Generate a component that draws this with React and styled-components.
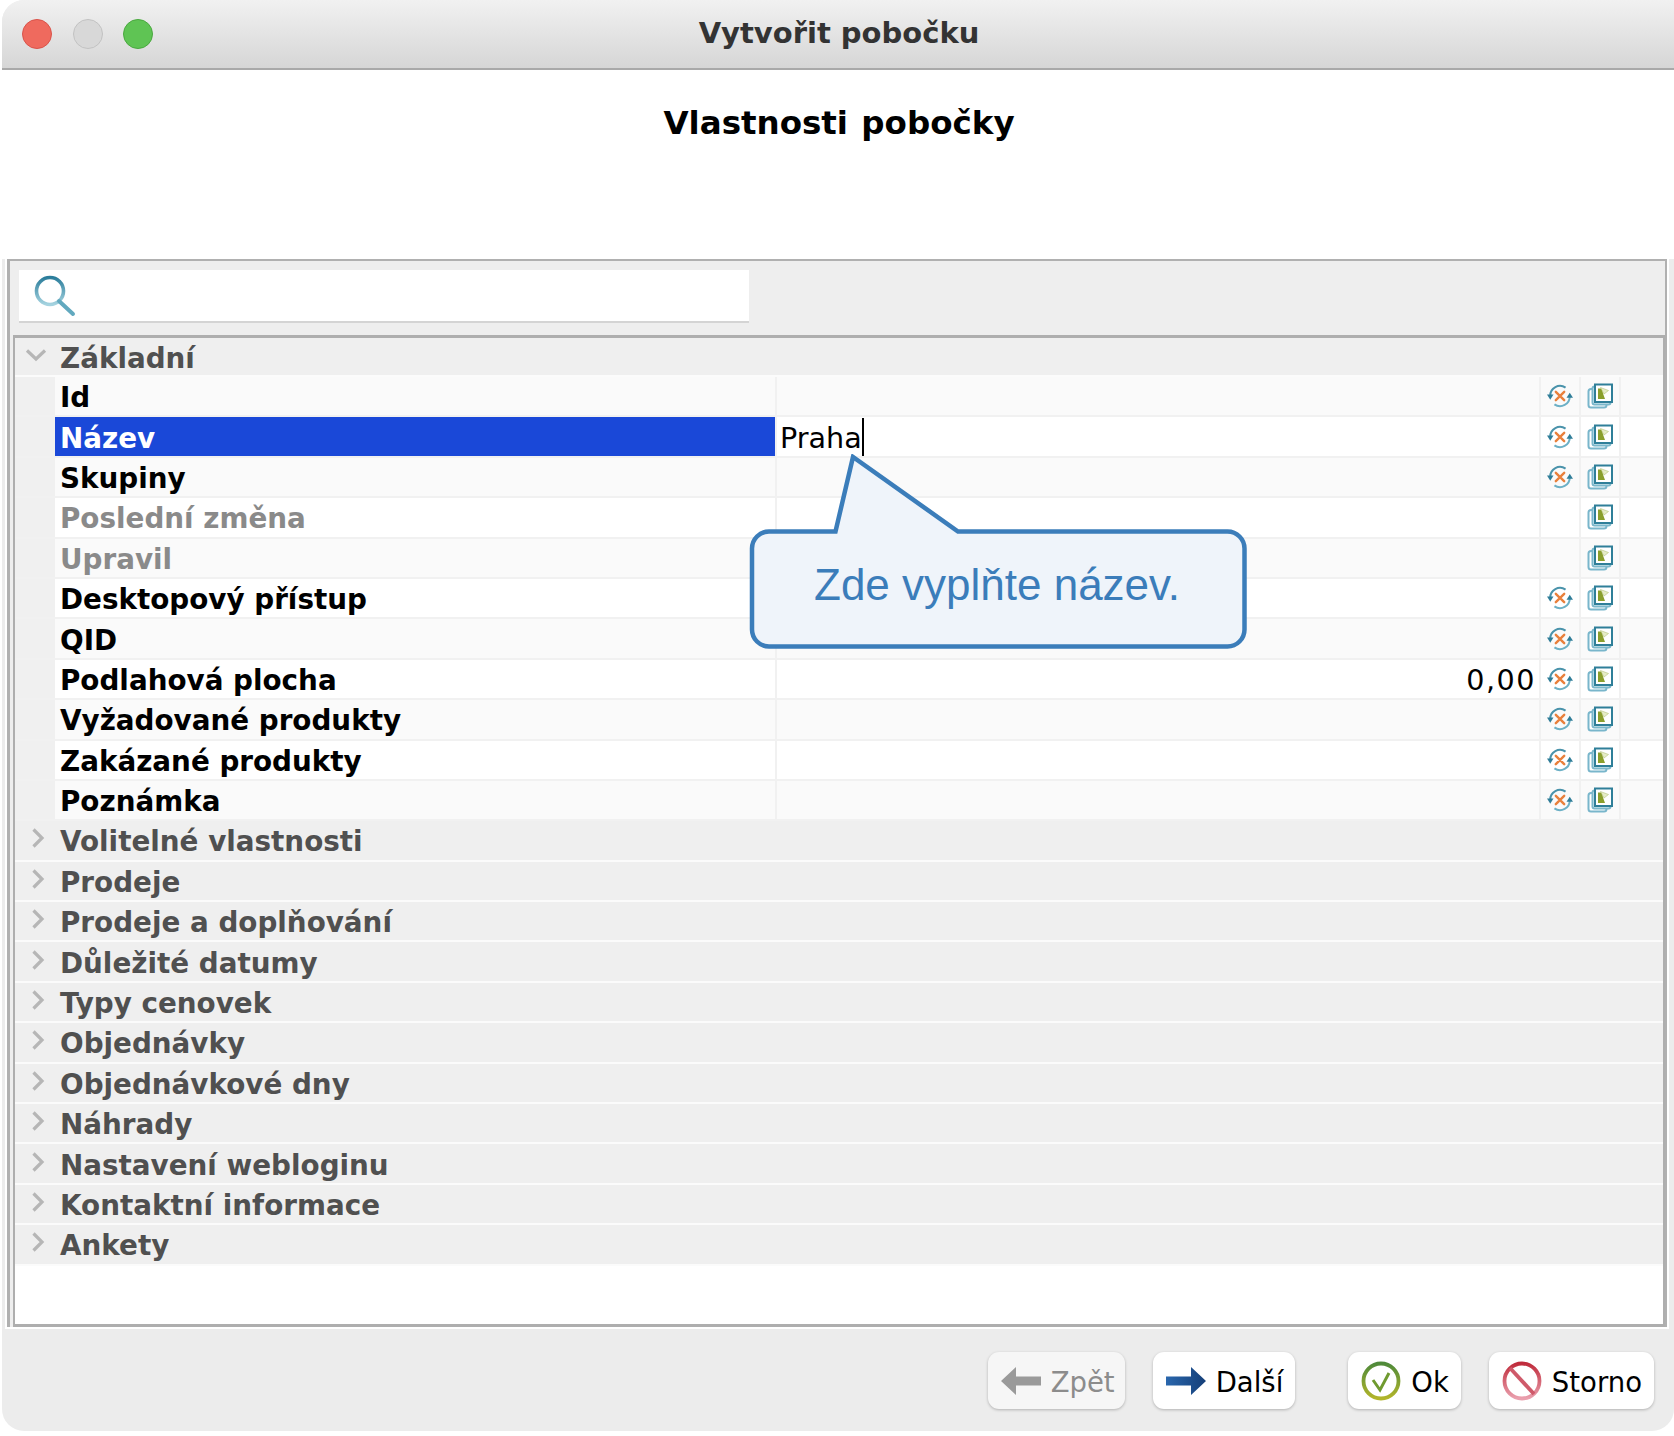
import React from 'react';
import styled, { createGlobalStyle } from 'styled-components';

const Global = createGlobalStyle`
  html, body { margin: 0; padding: 0; background: #fff; }
  body { font-family: "DejaVu Sans", "Noto Sans", sans-serif; }
`;

const ROWS = [
  { label: 'Id' },
  { label: 'Název', selected: true, value: 'Praha' },
  { label: 'Skupiny' },
  { label: 'Poslední změna', disabled: true },
  { label: 'Upravil', disabled: true },
  { label: 'Desktopový přístup' },
  { label: 'QID' },
  { label: 'Podlahová plocha', number: '0,00' },
  { label: 'Vyžadované produkty' },
  { label: 'Zakázané produkty' },
  { label: 'Poznámka' },
];

const GROUPS = [
  'Volitelné vlastnosti',
  'Prodeje',
  'Prodeje a doplňování',
  'Důležité datumy',
  'Typy cenovek',
  'Objednávky',
  'Objednávkové dny',
  'Náhrady',
  'Nastavení webloginu',
  'Kontaktní informace',
  'Ankety',
];

const ChevronDown = () => (
  <svg width="22" height="14" viewBox="0 0 22 14">
    <path d="M2 2.500l9 8.500 9-8.500" fill="none" stroke="#b6b6b6" strokeWidth="3.200" />
  </svg>
);

const ChevronRight = () => (
  <svg width="14" height="20" viewBox="0 0 14 20">
    <path d="M2.500 1.500l8.500 8.500-8.500 8.500" fill="none" stroke="#b6b6b6" strokeWidth="3.200" />
  </svg>
);

const ResetIcon = () => (
  <svg width="26" height="26" viewBox="0 0 28 28">
    <path d="M3.500 14A10.500 10.500 0 0 1 20 5" fill="none" stroke="#4a93ab" strokeWidth="2.200" />
    <path d="M24.500 14A10.500 10.500 0 0 1 8 23" fill="none" stroke="#6cb0c6" strokeWidth="2.200" />
    <path d="M0 12.500h7l-3.500 5.500z" fill="#2f7d98" />
    <path d="M21 16h7l-3.500-5.500z" fill="#2f7d98" />
    <path d="M9.500 9.500l9 9M18.500 9.500l-9 9" stroke="#e9803c" strokeWidth="2.600" strokeLinecap="round" />
  </svg>
);

const CopyIcon = () => (
  <svg width="26" height="26" viewBox="0 0 26 26">
    <rect x="1.500" y="6" width="18" height="18.500" rx="2.500" fill="#fff" stroke="#79b6cb" strokeWidth="2" />
    <rect x="5.500" y="3.500" width="18" height="18" rx="2" fill="#e8f3f6" stroke="#7ab7cb" strokeWidth="2" />
    <rect x="8" y="1.500" width="17" height="17.500" fill="#fff" stroke="#2f7f99" strokeWidth="2" />
    <path d="M11 5.500h4l1 5 2 5.500h-7z" fill="#8a9f2c" />
    <path d="M13.500 4.500l8 3-4.500 3.500z" fill="#e6ecc8" stroke="#b5c27a" strokeWidth="0.600" />
  </svg>
);

const SearchIcon = () => (
  <svg width="42" height="42" viewBox="0 0 42 42">
    <defs>
      <linearGradient id="lens" x1="0" y1="0" x2="0" y2="1">
        <stop offset="0" stopColor="#2b7d9b" />
        <stop offset="1" stopColor="#a5d3e0" />
      </linearGradient>
    </defs>
    <circle cx="16" cy="16" r="13.500" fill="none" stroke="url(#lens)" strokeWidth="3.600" />
    <path d="M25 26l14 13" stroke="#62a9bf" strokeWidth="4" strokeLinecap="round" />
  </svg>
);

const BackArrow = () => (
  <svg width="40" height="28" viewBox="0 0 40 28">
    <path d="M0 14L15 0v9.500h25v9H15V28z" fill="#9a9a9a" />
  </svg>
);

const NextArrow = () => (
  <svg width="40" height="28" viewBox="0 0 40 28">
    <defs>
      <linearGradient id="next" x1="0" y1="0" x2="1" y2="0">
        <stop offset="0" stopColor="#2a67ad" />
        <stop offset="1" stopColor="#153f78" />
      </linearGradient>
    </defs>
    <path d="M40 14L25 0v9.500H0v9h25V28z" fill="url(#next)" />
  </svg>
);

const OkIcon = () => (
  <svg width="40" height="42" viewBox="0 0 40 42">
    <defs>
      <linearGradient id="okRing" x1="0" y1="0" x2="0" y2="1">
        <stop offset="0" stopColor="#4f8a3a" />
        <stop offset="1" stopColor="#b2b52a" />
      </linearGradient>
    </defs>
    <circle cx="20" cy="21" r="17.500" fill="#fff" stroke="url(#okRing)" strokeWidth="3.800" />
    <path d="M12 20l7 10 9-17" fill="none" stroke="#6f9a2f" strokeWidth="3" />
  </svg>
);

const CancelIcon = () => (
  <svg width="40" height="42" viewBox="0 0 40 42">
    <defs>
      <linearGradient id="noRing" x1="0" y1="0" x2="0" y2="1">
        <stop offset="0" stopColor="#c02c3c" />
        <stop offset="1" stopColor="#eaa0ae" />
      </linearGradient>
    </defs>
    <circle cx="20" cy="21" r="17.500" fill="#fff" stroke="url(#noRing)" strokeWidth="3.800" />
    <path d="M8 8l24 26" stroke="#cf5a6a" strokeWidth="3.800" />
  </svg>
);

export default function App() {
  return (
    <>
      <Global />
      <Window>
        <TitleBar>
          <Lights>
            <Light color="#ef6a5e" edge="#d9534a" />
            <Light color="#d8d8d8" edge="#c2c2c2" />
            <Light color="#5fc454" edge="#4aa83f" />
          </Lights>
          <Title>Vytvořit pobočku</Title>
        </TitleBar>
        <Header>
          <Heading>Vlastnosti pobočky</Heading>
        </Header>
        <Panel>
          <SearchRow>
            <SearchBox>
              <SearchIcon />
            </SearchBox>
          </SearchRow>
          <Tree>
            <GroupRow first>
              <Gutter down>
                <ChevronDown />
              </Gutter>
              <GroupLabel>Základní</GroupLabel>
            </GroupRow>
            {ROWS.map((row) => (
              <PropRow key={row.label}>
                <PropGutter />
                <PropLabel selected={row.selected} disabled={row.disabled}>
                  {row.label}
                </PropLabel>
                <PropValue active={!!row.value}>
                  {row.value && (
                    <>
                      {row.value}
                      <Caret />
                    </>
                  )}
                  {row.number && <NumberValue>{row.number}</NumberValue>}
                </PropValue>
                <IconCell>{!row.disabled && <ResetIcon />}</IconCell>
                <IconCell>
                  <CopyIcon />
                </IconCell>
                <IconCell />
              </PropRow>
            ))}
            {GROUPS.map((group) => (
              <GroupRow key={group}>
                <Gutter>
                  <ChevronRight />
                </Gutter>
                <GroupLabel>{group}</GroupLabel>
              </GroupRow>
            ))}
          </Tree>
        </Panel>
        <Footer>
          <Button disabled>
            <BackArrow />
            Zpět
          </Button>
          <Button>
            <NextArrow />
            Další
          </Button>
          <Button wide>
            <OkIcon />
            Ok
          </Button>
          <Button>
            <CancelIcon />
            Storno
          </Button>
        </Footer>
        <Callout>
          <svg width="510" height="200" viewBox="0 0 510 200">
            <path
              d="M20 77.500H86.500L104 3l105 74.500H478.500a17 17 0 0 1 17 17v81a17 17 0 0 1-17 17H20a17 17 0 0 1-17-17v-81a17 17 0 0 1 17-17z"
              fill="#eff4fa"
              stroke="#3b7dba"
              strokeWidth="4.500"
            />
          </svg>
          <CalloutText>Zde vyplňte název.</CalloutText>
        </Callout>
      </Window>
    </>
  );
}

const Window = styled.div`
  position: relative;
  box-sizing: border-box;
  width: 1672px;
  height: 1431px;
  margin-left: 2px;
  background: #ececec;
  border-radius: 22px 0 22px 22px;
  overflow: hidden;
  display: flex;
  flex-direction: column;
`;

const TitleBar = styled.div`
  position: relative;
  box-sizing: border-box;
  height: 70px;
  flex: none;
  display: flex;
  align-items: center;
  justify-content: center;
  background: linear-gradient(#f1f1f1, #d6d6d6);
  border-bottom: 2px solid #a9a9a9;
`;

const Lights = styled.div`
  position: absolute;
  left: 20px;
  top: 19px;
  display: flex;
  gap: 20.5px;
`;

const Light = styled.span`
  box-sizing: border-box;
  width: 30px;
  height: 30px;
  border-radius: 50%;
  background: ${(p) => p.color};
  border: 1px solid ${(p) => p.edge};
`;

const Title = styled.div`
  font-size: 29px;
  font-weight: 700;
  color: #333;
  margin-top: -3px;
  margin-left: 2px;
`;

const Header = styled.div`
  height: 189px;
  flex: none;
  display: flex;
  justify-content: center;
  background: #fff;
`;

const Heading = styled.h1`
  margin: 30px 0 0 2px;
  font-size: 32.5px;
  font-weight: 700;
  word-spacing: 2px;
  line-height: 46px;
  color: #000;
`;

const Panel = styled.div`
  box-sizing: border-box;
  height: 1068px;
  flex: none;
  margin: 0 7px 0 5px;
  padding: 9px 0 0 3px;
  background: #eee;
  border: solid #b0b0b0;
  border-width: 2px 2px 0 3px;
  outline: 2px solid #fff;
  display: flex;
  flex-direction: column;
`;

const SearchRow = styled.div`
  height: 65px;
  flex: none;
  padding-left: 6px;
`;

const SearchBox = styled.div`
  box-sizing: border-box;
  width: 730px;
  height: 53px;
  padding: 5px 0 0 15px;
  background: #fff;
  border-bottom: 2px solid #d4d4d4;
`;

const Tree = styled.div`
  box-sizing: border-box;
  flex: 1;
  background: #fff;
  border: 3px solid #aeaeae;
  border-left-width: 2px;
  border-right-width: 2px;
`;

const GroupRow = styled.div`
  box-sizing: border-box;
  height: ${(p) => (p.first ? '39px' : '40.4px')};
  display: flex;
  align-items: center;
  background: #efefef;
  border-bottom: 2px solid #fbfbfb;
`;

const Gutter = styled.div`
  width: 45px;
  flex: none;
  display: flex;
  justify-content: center;
  margin-left: ${(p) => (p.down ? '-2px' : '0')};
  margin-right: ${(p) => (p.down ? '2px' : '0')};
  margin-top: -4px;
`;

const GroupLabel = styled.div`
  padding-top: 3px;
  font-size: 27.8px;
  font-weight: 700;
  color: #505050;
`;

const PropRow = styled.div`
  box-sizing: border-box;
  height: 40.4px;
  display: flex;
  background: #fff;
  border-bottom: 2px solid #f1f1f1;
  &:nth-child(even) {
    background: #fafafa;
  }
`;

const PropGutter = styled.div`
  width: 40px;
  flex: none;
  background: #f0f0f0;
`;

const PropLabel = styled.div`
  box-sizing: border-box;
  width: 720px;
  flex: none;
  padding: 3px 0 0 5px;
  display: flex;
  align-items: center;
  font-size: 27.8px;
  font-weight: 700;
  color: ${(p) => (p.selected ? '#fff' : p.disabled ? '#8a8a8a' : '#000')};
  background: ${(p) => (p.selected ? '#1a48d8' : 'transparent')};
`;

const PropValue = styled.div`
  box-sizing: border-box;
  flex: 1;
  padding: 3px 3px 0 3px;
  display: flex;
  align-items: center;
  font-size: 28.6px;
  color: #000;
  border-left: 2px solid #f1f1f1;
  background: ${(p) => (p.active ? '#fff' : 'transparent')};
`;

const NumberValue = styled.span`
  margin-left: auto;
  letter-spacing: 1.5px;
`;

const Caret = styled.span`
  width: 2px;
  height: 38px;
  margin-top: -3px;
  background: #000;
`;

const IconCell = styled.div`
  box-sizing: border-box;
  width: 40px;
  flex: none;
  display: flex;
  align-items: center;
  justify-content: center;
  border-left: 2px solid #f1f1f1;
  &:last-child {
    width: 44px;
  }
`;

const Footer = styled.div`
  flex: 1;
  display: flex;
  align-items: center;
  justify-content: flex-end;
  padding: 3px 20px 0 0;
  gap: 28px;
  font-size: 27.5px;
`;

const Button = styled.button`
  box-sizing: border-box;
  height: 57px;
  padding: 3px ${(p) => (p.disabled ? '10px' : '12px')} 0 13px;
  display: flex;
  align-items: center;
  gap: 10px;
  margin-left: ${(p) => (p.wide ? '25px' : '0')};
  font: inherit;
  color: ${(p) => (p.disabled ? '#8c8c8c' : '#000')};
  background: ${(p) => (p.disabled ? '#f6f6f6' : '#fff')};
  border: 0;
  border-radius: 11px;
  box-shadow: 0 1px 3px rgba(0, 0, 0, 0.25);
  svg {
    margin-top: -3px;
  }
`;

const Callout = styled.div`
  position: absolute;
  left: 747px;
  top: 454px;
  width: 510px;
  height: 200px;
`;

const CalloutText = styled.div`
  position: absolute;
  left: 65px;
  top: 103px;
  font-family: "Liberation Sans", sans-serif;
  font-size: 44px;
  line-height: 56px;
  color: #3b7dba;
  white-space: nowrap;
`;
